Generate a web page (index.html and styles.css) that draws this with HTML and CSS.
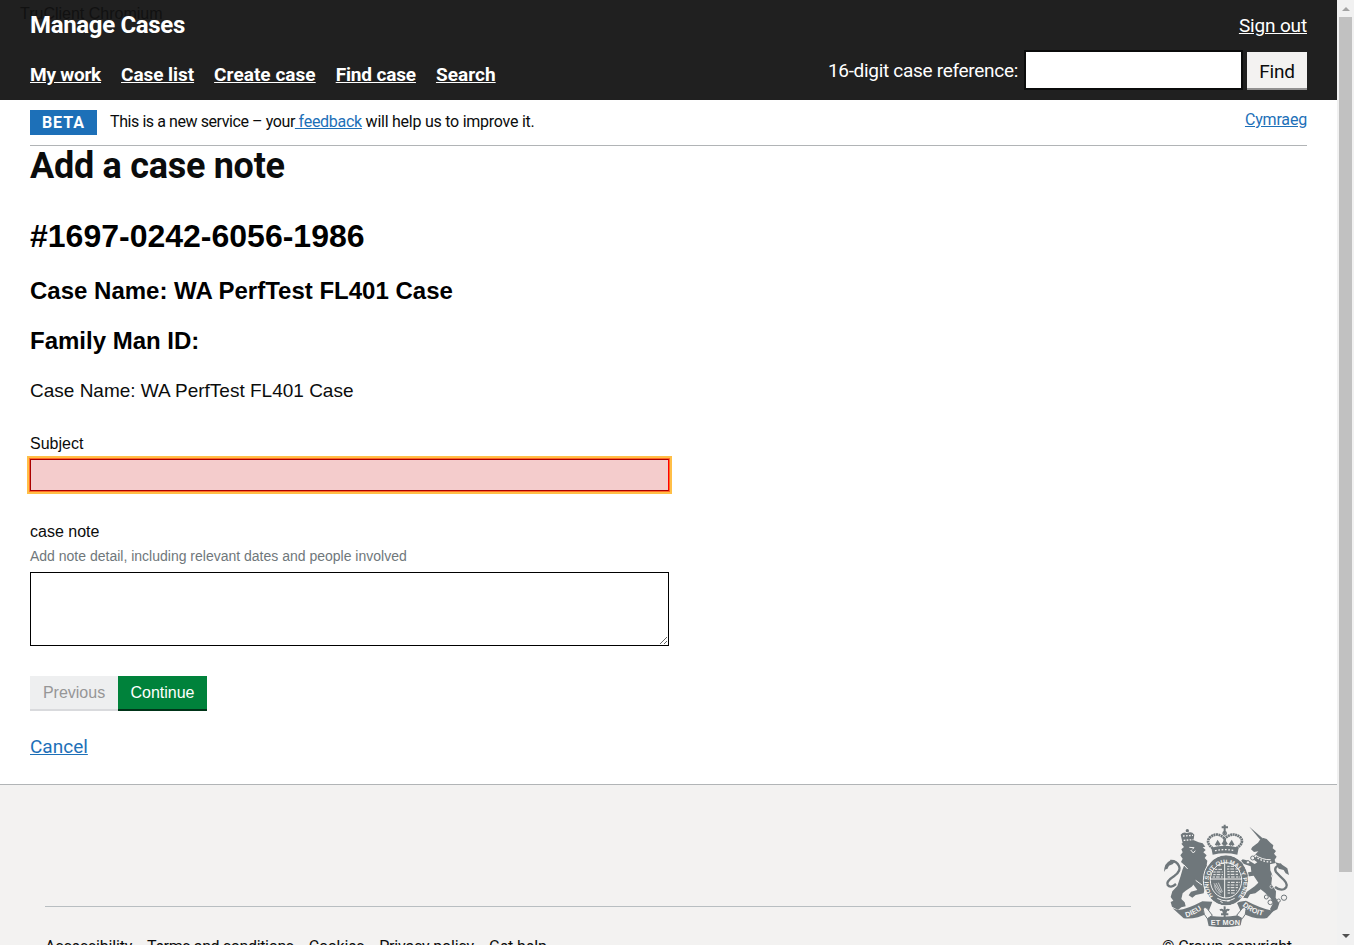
FILE: index.html
```
<!DOCTYPE html>
<html lang="en">
<head>
<meta charset="utf-8">
<title>Manage Cases</title>
<link rel="stylesheet" href="styles.css">
</head>
<body>
<div class="window">
<div class="page">
  <header class="header">
    <span class="session-label">TruClient Chromium</span>
    <div class="header-top">
      <a class="service-name">Manage Cases</a>
      <a class="sign-out" href="#">Sign out</a>
    </div>
    <div class="header-bottom">
      <nav class="nav">
        <a class="nav-work" href="#">My work</a>
        <a class="nav-list" href="#">Case list</a>
        <a class="nav-create" href="#">Create case</a>
        <a class="nav-find" href="#">Find case</a>
        <a class="nav-create" href="#">Search</a>
      </nav>
      <form class="find">
        <label class="find-label" for="ref">16-digit case reference:</label>
        <input class="find-input" id="ref" type="text">
        <button class="find-button" type="button">Find</button>
      </form>
    </div>
  </header>
  <div class="phase">
    <strong class="phase-tag">BETA</strong>
    <span class="phase-text"><span class="phase-intro">This is a new service – your</span><a class="feedback" href="#">&nbsp;feedback</a><span class="phase-outro">&nbsp;will help us to improve it.</span></span>
    <a class="language" href="#">Cymraeg</a>
  </div>
  <main class="main">
    <h1 class="title">Add a case note</h1>
    <h1 class="case-id">#1697-0242-6056-1986</h1>
    <h2 class="case-heading">Case Name: WA PerfTest FL401 Case</h2>
    <h2 class="case-heading">Family Man ID:</h2>
    <p class="case-name">Case Name: WA PerfTest FL401 Case</p>
    <label class="label" for="subject">Subject</label>
    <input class="subject" id="subject" type="text">
    <label class="label" for="note">case note</label>
    <span class="hint">Add note detail, including relevant dates and people involved</span>
    <textarea class="note" id="note"></textarea>
    <div class="actions">
      <button class="button previous" disabled>Previous</button>
      <button class="button continue">Continue</button>
    </div>
    <a class="cancel" href="#">Cancel</a>
  </main>
  <footer class="footer">
    <div class="footer-main">
      <div class="footer-links">
        <a class="link-access">Accessibility</a><a class="link-terms">Terms and conditions</a><a class="link-cookies">Cookies</a><a class="link-privacy">Privacy policy</a><a class="link-help">Get help</a>
      </div>
    </div>
    <div class="crown">
      <svg class="crest" viewBox="42 28 375 309" aria-hidden="true">
        <defs>
          <path id="garter" d="M189 245A52 59 0 1 1 267 245"/>
          <path id="rib1" d="M109 308Q140 299 166 276"/>
          <path id="rib2" d="M277 273Q306 299 352 306"/>
        </defs>
        <g fill="#6f777b">
          <path d="M98 86L92 60Q101 50 111 56Q124 48 133 60L130 80Z"/>
          <circle cx="112" cy="48" r="5"/>
          <path d="M94 87L110 78L130 76L146 83L158 86L166 96L158 98L167 106L160 113L170 122L164 130L172 138L170 152L178 162L163 184L162 202L170 211L157 220L143 211L137 202L125 216L107 228L98 236L94 253L104 263L107 275L94 278L84 286L66 276L62 262L70 258L62 247L67 230L82 214L91 187L97 166L103 151L93 142L98 132L91 122L98 113L94 104L102 97Z"/>
          <path d="M134 191Q159 205 164 222L161 236L137 241L127 249L116 242L123 231L142 226L128 207Z"/>
          <path d="M42 172Q42 145 63 136L75 138L69 148L57 153L52 163L47 164Z"/>
          <path d="M298 36L345 77L337 83Z"/>
          <path d="M307 97L324 84L330 75L340 79L338 69L350 73L361 84L370 92L368 101L378 109L372 117L380 126L374 135L377 145L360 149L361 167L367 181L364 207L378 230L377 249L388 266L382 284L365 292L360 283L369 266L362 251L345 234L332 224L316 236L300 239L293 251L278 249L277 241L294 229L314 215L325 204L311 183L287 186L284 175L304 171L302 155L282 148L272 155L267 145L278 134L299 139L314 148L322 143L305 131L325 110L312 112L303 104Z"/>
          <path d="M376 143L392 147L412 161L417 181L407 176L401 166L386 162Z"/>
          <ellipse cx="228" cy="197" rx="66" ry="75"/>
          <path d="M184 99Q224 88 266 99L262 120Q225 112 188 120Z"/>
          <path d="M68 281L84 286Q112 284 157 260L187 261L174 295Q138 315 101 311Z"/>
          <path d="M378 281L362 287Q329 279 288 258L260 263L274 294Q318 317 351 310Z"/>
          <path d="M168 299L183 304Q224 309 266 302L279 298L272 332Q227 342 176 334Z"/>
        </g>
        <g fill="#f3f2f1" stroke="#6f777b" stroke-width="3">
          <path d="M160 284Q162 275 171 281L187 302L172 312Q160 300 160 284ZM288 284Q286 275 277 281L260 302L277 312Q289 300 288 284Z"/>
          <circle cx="349" cy="247" r="6"/><circle cx="361" cy="263" r="7"/><circle cx="402" cy="249" r="8"/><circle cx="386" cy="258" r="5"/><circle cx="308" cy="130" r="6"/><circle cx="294" cy="143" r="5"/>
        </g>
        <g fill="none" stroke="#6f777b">
          <path stroke-width="7" d="M61 139Q80 138 87 154Q94 168 74 183Q47 200 53 211Q61 222 78 208"/>
          <path stroke-width="7" d="M394 149Q369 156 378 172Q389 184 402 196Q418 213 403 223Q390 229 375 217"/>
          <path stroke-width="8" stroke-dasharray="6 1.5" d="M189 101Q164 83 181 67Q203 50 224 72V99M259 101Q286 83 270 67Q247 50 224 72"/>
          <path stroke-width="6" d="M224 30V58M215 38H234"/>
          <circle cx="224" cy="56" r="5" stroke-width="4"/>
          <path stroke-width="8" d="M198 92l5-9 6 9M218 90l6-10 6 10M239 92l6-9 5 9"/>
          <path stroke-width="6" d="M224 273V309M210 287Q219 280 222 297M238 287Q229 280 226 297M213 299H235"/>
        </g>
        <g fill="none" stroke="#f3f2f1">
          <ellipse cx="228" cy="197" rx="47" ry="53" stroke-width="3"/>
          <ellipse cx="228" cy="197" rx="68" ry="77" stroke-width="3"/>
          <path stroke-width="3" d="M224 146V250M182 193H274"/>
          <path stroke-width="3" stroke-dasharray="7 3 11 4" d="M195 164H219M190 172H218M190 180H219M188 187H218M232 155H252M231 163H264M232 171H268M232 179H266M233 187H270M233 203H270M232 211H268M232 219H264M233 227H260M233 235H254"/>
          <path stroke-width="2" d="M192 206L210 234M198 205L214 235M205 204L217 232M194 212Q195 230 212 240"/>
          <path stroke-width="3" d="M118 98L132 99L127 104M122 106L130 115L136 108M102 151L113 163M137 197L156 211M312 119Q339 137 362 135"/>
          <path stroke-width="4" stroke-dasharray="5 5" d="M314 124Q337 143 364 142M195 108Q224 102 254 108"/>
          <path stroke-width="4" stroke-dasharray="5 4" d="M99 64L129 62M101 77L130 75"/>
          <circle cx="369" cy="184" r="5" stroke-width="2"/><circle cx="365" cy="216" r="5" stroke-width="2"/>
          <path stroke-width="3" d="M202 251Q229 266 254 251M211 260L218 264M232 260L240 258"/>
        </g>
        <g class="motto">
          <text><textPath href="#garter" textLength="262" lengthAdjust="spacingAndGlyphs">HONI SOIT QUI MAL Y PENSE</textPath></text>
          <text class="ribbon"><textPath href="#rib1">DIEU</textPath></text>
          <text class="ribbon"><textPath href="#rib2">DROIT</textPath></text>
          <text class="ribbon" x="182" y="331" textLength="88">ET MON</text>
        </g>
      </svg>
      <a class="copyright">© Crown copyright</a>
    </div>
  </footer>
</div>
<div class="scrollbar"><i class="arrow up"></i><i class="thumb"></i><i class="arrow down"></i></div>
</div>
</body>
</html>
```
FILE: styles.css
```
* { box-sizing: border-box; }
body { margin: 0; height: 945px; overflow: hidden; background: #fff; color: #0b0c0c; font-family: "Liberation Sans", Arial, sans-serif; }
.window { display: flex; height: 945px; overflow: hidden; }
.page { flex: 1; display: flex; flex-direction: column; white-space: nowrap; }
.header, .phase, .title, .cancel, .footer { font-family: Roboto, sans-serif; }
.header { position: relative; height: 100px; flex: none; background: #202020; padding: 0 30px; color: #fff; }
.session-label { position: absolute; left: 20px; top: 5px; font: 16px/18px "Liberation Sans", sans-serif; color: #111; }
.header-top { position: relative; display: flex; justify-content: space-between; height: 50px; }
.service-name { font-weight: 700; font-size: 24px; line-height: 50px; letter-spacing: -0.34px; }
.sign-out { font-size: 19px; line-height: 51px; color: #fff; letter-spacing: -0.15px; }
.header-bottom { display: flex; justify-content: space-between; height: 50px; }
.nav { display: flex; gap: 20px; font-size: 19px; font-weight: 700; line-height: 49px; }
.nav a { color: #fff; }
.nav-work { letter-spacing: -0.24px; }
.nav-list { letter-spacing: -0.06px; }
.nav-create { letter-spacing: 0.04px; }
.nav-find { letter-spacing: -0.15px; }
.find { display: flex; align-items: flex-start; }
.find-label { font-size: 19px; line-height: 42px; margin-right: 6px; letter-spacing: -0.3px; }
.find-input { width: 219px; height: 40px; border: 2px solid #0b0c0c; margin-right: 4px; }
.find-button { width: 60px; height: 36px; margin-top: 2px; border: 0; padding: 4px 0 0; background: #f3f2f1; box-shadow: 0 2px 0 #929191; font: 19px/28px Roboto, sans-serif; letter-spacing: -0.2px; color: #0b0c0c; }
.phase { display: flex; flex: none; margin: 0 30px; height: 46px; padding-top: 10px; border-bottom: 1px solid #b1b4b6; font-size: 16px; }
.phase-tag { width: 67px; height: 25px; background: #1d70b8; color: #fff; text-align: center; line-height: 25px; letter-spacing: 1px; margin-right: 13px; }
.phase-text { line-height: 24px; }
.phase-intro { letter-spacing: -0.42px; }
.feedback { letter-spacing: -0.28px; }
.phase-outro { letter-spacing: -0.25px; }
.phase a, .cancel { color: #1d70b8; text-decoration: underline; }
.language { margin-left: auto; line-height: 20px; letter-spacing: -0.18px; }
.main { height: 638px; flex: none; padding: 0 30px; display: flex; flex-direction: column; align-items: flex-start; }
.title { margin: 0; font-size: 36px; line-height: 41px; height: 70px; font-weight: 700; letter-spacing: -0.28px; }
.case-id { margin: 0 0 20px; font-size: 32px; line-height: 40px; color: #000; }
.case-heading { margin: 0 0 20px; font-size: 24px; line-height: 30px; color: #000; }
.case-name { margin: 0 0 25px; font-size: 19px; line-height: 30px; }
.label { font-size: 16px; line-height: 25px; }
.subject { width: 639px; height: 32px; margin: 3px 0 28px; border: 1px solid #a00; border-right-color: #f00; background: #f4cccc; box-shadow: 0 0 0 1px #ff6a28, 0 0 0 3px #ffbf47; }
.hint { font-size: 14px; line-height: 25px; color: #6f777b; }
.note { width: 639px; height: 74px; border: 1px solid #000; margin: 3px 0 30px; }
.actions { display: flex; }
.button { border: 0; padding: 1px 0 0; height: 33px; font: 16px/32px "Liberation Sans", sans-serif; }
.previous { width: 88px; background: #eeeff0; color: #969697; box-shadow: 0 2px 0 #d9dadd; }
.continue { width: 89px; background: #00823b; color: #fff; box-shadow: 0 2px 0 #003418; }
.cancel { margin-top: 25px; font-size: 19px; line-height: 26px; }
.footer { flex: none; height: 161px; border-top: 1px solid #b1b4b6; background: #f3f2f1; display: flex; padding: 39px 45px 0; justify-content: space-between; font-size: 16px; }
.footer-main { width: 1086px; padding-top: 82px; }
.footer-links { border-top: 1px solid #b8bec1; padding-top: 30px; display: flex; gap: 15px; line-height: 20px; }
.link-access { letter-spacing: -0.19px; }
.link-terms { letter-spacing: -0.37px; }
.link-cookies { letter-spacing: -0.28px; }
.link-privacy { letter-spacing: -0.2px; }
.link-help { letter-spacing: -0.1px; }
.crown { width: 130px; display: flex; flex-direction: column; align-items: flex-start; }
.crest { width: 125px; height: 103px; flex: none; margin-left: 2px; }
.copyright { line-height: 20px; margin-top: 10px; letter-spacing: -0.15px; }
.motto { fill: #f3f2f1; font: 700 18px "Liberation Sans", sans-serif; }
.ribbon { font-size: 22px; }
.scrollbar { width: 17px; background: #f1f1f1; display: flex; flex-direction: column; align-items: center; }
.thumb { width: 13px; height: 855px; background: #c1c1c1; }
.arrow { width: 0; height: 0; border: 4px solid transparent; }
.up { border-bottom-color: #a3a3a3; border-top: 0; margin: 7px 0 6px; }
.down { border-top-color: #505050; border-bottom: 0; margin-top: 62px; }
```
